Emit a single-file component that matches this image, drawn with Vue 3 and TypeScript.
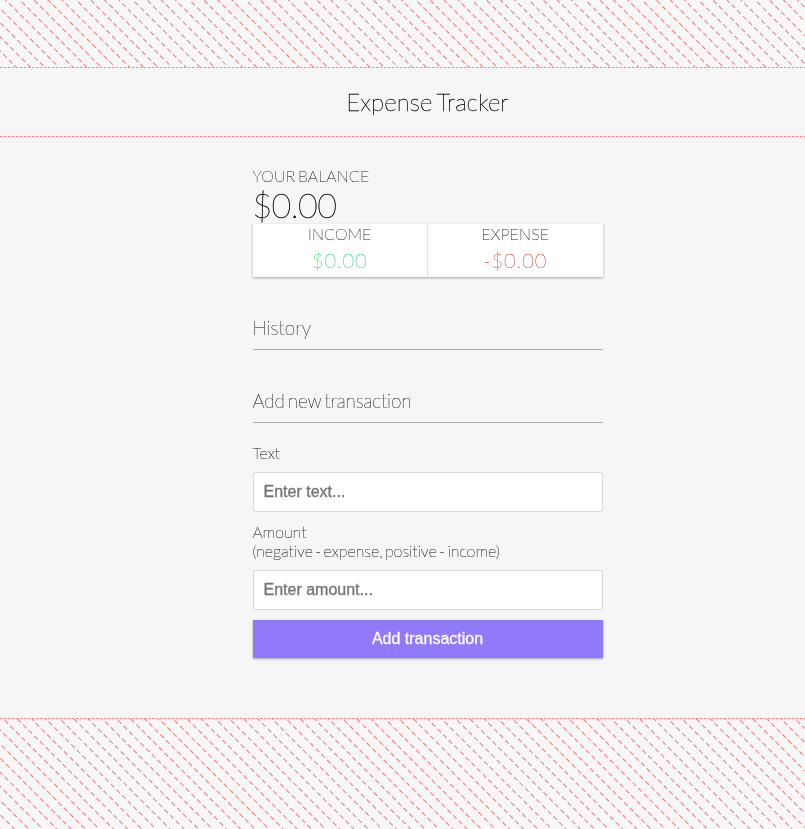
<script setup lang="ts">
import { computed, ref } from 'vue'

interface Transaction {
  id: number
  text: string
  amount: number
}

const stripes = Array.from({ length: 118 }, (_, i) => -584 + i * 10)

const transactions = ref<Transaction[]>([])
const text = ref('')
const amount = ref('')

const income = computed(() =>
  transactions.value.filter((t) => t.amount > 0).reduce((sum, t) => sum + t.amount, 0)
)
const expense = computed(() =>
  transactions.value.filter((t) => t.amount < 0).reduce((sum, t) => sum - t.amount, 0)
)
const balance = computed(() => income.value - expense.value)

function addTransaction() {
  const value = Number(amount.value)
  if (!text.value || !value) return
  transactions.value.push({ id: Date.now(), text: text.value, amount: value })
  text.value = ''
  amount.value = ''
}
</script>

<template>
  <div class="page">
    <svg class="backdrop" viewBox="0 0 805 829" width="805" height="829" aria-hidden="true">
      <g transform="rotate(45)" stroke="#f4757a" stroke-width="1" stroke-dasharray="5 3">
        <line v-for="y in stripes" :key="y" x1="-7.4" :y1="y" x2="1160" :y2="y" />
      </g>
    </svg>
    <div class="content">
      <header class="header"><h2>Expense Tracker</h2></header>
      <main class="main">
        <div class="container">
          <h4 class="label">Your Balance</h4>
          <h1 class="balance">${{ balance.toFixed(2) }}</h1>
          <div class="summary">
            <div class="cell">
              <h4 class="label">Income</h4>
              <p class="money plus">${{ income.toFixed(2) }}</p>
            </div>
            <div class="cell">
              <h4 class="label">Expense</h4>
              <p class="money minus">-${{ expense.toFixed(2) }}</p>
            </div>
          </div>
          <h3 class="history">History</h3>
          <ul class="list">
            <li v-for="t in transactions" :key="t.id">{{ t.text }} {{ t.amount }}</li>
          </ul>
          <h3 class="add">Add new transaction</h3>
          <form @submit.prevent="addTransaction">
            <label for="text">Text</label>
            <input id="text" v-model="text" type="text" placeholder="Enter text..." />
            <label for="amount" class="second">Amount<br />(negative - expense, positive - income)</label>
            <input id="amount" v-model="amount" type="text" placeholder="Enter amount..." />
            <button class="btn">Add transaction</button>
          </form>
        </div>
      </main>
    </div>
  </div>
</template>

<style>
body {
  margin: 0;
}
</style>

<style scoped>
* {
  box-sizing: border-box;
}
.page {
  display: grid;
  height: 829px;
  overflow: hidden;
  font-family: Lato, 'Liberation Sans', sans-serif;
  font-weight: 100;
  font-size: 16px;
  font-variant-ligatures: none;
  word-spacing: -0.13em;
  color: #000;
  background: #f7f7f7;
  -webkit-text-stroke: 0.15px;
}
.backdrop,
.content {
  grid-area: 1 / 1;
}
.content {
  padding-top: 67px;
  will-change: transform;
}
h1, h2, h3, h4, p, ul {
  margin: 0;
  padding: 0;
  font-weight: 100;
}
.header,
.main {
  --dash: repeating-linear-gradient(90deg, #ff858c 0 2px, #fdc0c3 2px 3px, #f7f7f7 3px 4px);
  background: var(--dash) bottom / 100% 1px no-repeat, #f6f6f6;
}
.header {
  height: 70px;
  padding: 20px 0 0 50px;
  text-align: center;
  background: var(--dash) top / 100% 1px no-repeat, var(--dash) bottom / 100% 1px no-repeat, #f6f6f6;
}
.header h2 {
  font-size: 24px;
  line-height: 29px;
  letter-spacing: 0.08px;
  -webkit-text-stroke: 0.35px;
}
.main {
  height: 582px;
  padding: 29px 0 0 50px;
}
.container {
  width: 350px;
  margin: 0 auto;
}
.label {
  font-size: 16px;
  line-height: 19px;
  letter-spacing: 0.15px;
  text-transform: uppercase;
}
.balance {
  padding-top: 1px;
  font-size: 34px;
  line-height: 38px;
  letter-spacing: -0.6px;
  -webkit-text-stroke: 0.35px;
}
.summary {
  display: flex;
  height: 53px;
  background: #fff;
  box-shadow: 0 1px 3px rgba(0, 0, 0, 0.12), 0 1px 2px rgba(0, 0, 0, 0.24);
}
.cell {
  flex: 1;
  text-align: center;
}
.cell:first-child {
  border-right: 1px solid #dedede;
}
.money {
  margin-top: 5px;
  font-size: 20px;
  line-height: 24px;
  letter-spacing: 0.9px;
}
.plus {
  color: #2ecc71;
}
.minus {
  color: #c0392b;
}
.history,
.add {
  padding-bottom: 10px;
  font-size: 19px;
  line-height: 22px;
  border-bottom: 1px solid #aaa;
}
.history {
  margin-top: 40px;
}
.add {
  margin: 40px 0 20px;
  letter-spacing: -0.15px;
}
.list {
  list-style: none;
}
label {
  display: block;
  line-height: 19px;
  letter-spacing: -0.04px;
}
.second {
  margin-top: 10px;
}
input {
  display: block;
  width: 100%;
  height: 40px;
  margin-top: 10px;
  padding: 10px;
  font: 16px 'Liberation Sans', sans-serif;
  word-spacing: 0;
  -webkit-text-stroke: 0.35px;
  border: 1px solid #d8d8d8;
  border-radius: 2px;
  background: #fff;
}
.btn {
  display: block;
  width: 100%;
  height: 38px;
  margin-top: 10px;
  padding: 0;
  font: 16px 'Liberation Sans', sans-serif;
  -webkit-text-stroke: 0.3px;
  color: #fff;
  background: #9179f9;
  border: 0;
  box-shadow: 0 1px 3px rgba(0, 0, 0, 0.12), 0 1px 2px rgba(0, 0, 0, 0.24);
}
</style>
